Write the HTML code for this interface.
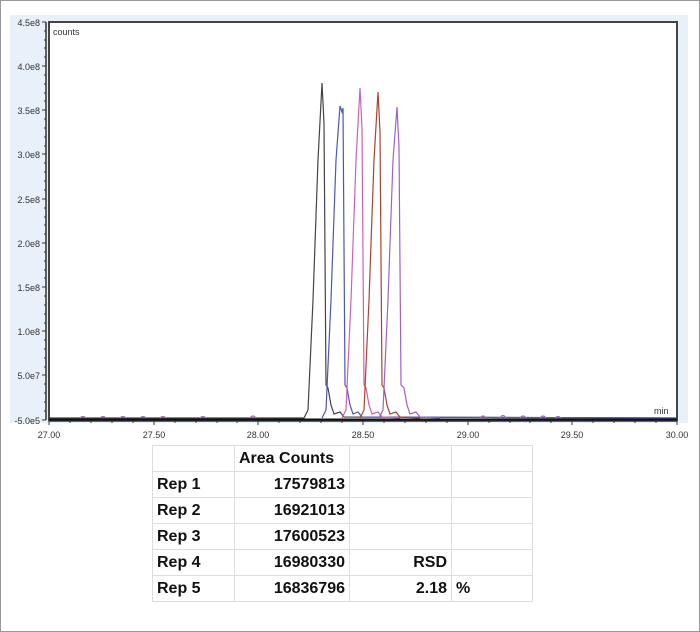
<!DOCTYPE html>
<html><head><meta charset="utf-8"><style>
body{margin:0;background:#fff;}
.wrap{position:relative;width:700px;height:632px;overflow:hidden;}
table{position:absolute;left:152px;top:445px;border-collapse:collapse;font-family:"Liberation Sans",sans-serif;font-weight:bold;font-size:16px;color:#111;}
td{border:1px solid #ddd;height:25px;padding:0 4px;}
</style></head><body><div class="wrap">
<svg width="700" height="632" style="position:absolute;left:0;top:0" font-family="Liberation Sans,sans-serif">
<rect x="0.5" y="0.5" width="699" height="631" fill="#fff" stroke="#999"/>
<rect x="10" y="15" width="678" height="408" fill="#e8f0fa"/>
<rect x="49" y="22" width="628" height="398" fill="#fff" stroke="#444" stroke-width="2"/>
<text x="53" y="35" font-size="9" fill="#333">counts</text>
<text x="654" y="414" font-size="9" fill="#333">min</text>
<g font-size="9" fill="#333" text-anchor="end">
<text x="40" y="26">4.5e8</text><text x="40" y="70">4.0e8</text><text x="40" y="114">3.5e8</text>
<text x="40" y="158">3.0e8</text><text x="40" y="203">2.5e8</text><text x="40" y="247">2.0e8</text>
<text x="40" y="291">1.5e8</text><text x="40" y="335">1.0e8</text><text x="40" y="379">5.0e7</text><text x="40" y="424">-5.0e5</text>
</g>
<g font-size="9" fill="#333" text-anchor="middle">
<text x="49" y="438">27.00</text><text x="154" y="438">27.50</text><text x="258" y="438">28.00</text>
<text x="363" y="438">28.50</text><text x="468" y="438">29.00</text><text x="572" y="438">29.50</text><text x="677" y="438">30.00</text>
</g>
<path d="M46 22V420M49 421H677" stroke="#333" stroke-width="1.5"/>
<path d="M46 22h-4M46 66h-4M46 110h-4M46 154h-4M46 199h-4M46 243h-4M46 287h-4M46 331h-4M46 375h-4M46 420h-4M49 421v4M154 421v4M258 421v4M363 421v4M468 421v4M572 421v4M677 421v4" stroke="#333"/>
<path d="M46 31h-2M46 40h-2M46 48h-2M46 57h-2M46 75h-2M46 84h-2M46 93h-2M46 101h-2M46 119h-2M46 128h-2M46 137h-2M46 146h-2M46 163h-2M46 172h-2M46 181h-2M46 190h-2M46 208h-2M46 217h-2M46 225h-2M46 234h-2M46 252h-2M46 261h-2M46 270h-2M46 278h-2M46 296h-2M46 305h-2M46 314h-2M46 323h-2M46 340h-2M46 349h-2M46 358h-2M46 367h-2M46 384h-2M46 393h-2M46 402h-2M46 411h-2M70 421v2M91 421v2M112 421v2M133 421v2M175 421v2M196 421v2M217 421v2M237 421v2M279 421v2M300 421v2M321 421v2M342 421v2M384 421v2M405 421v2M426 421v2M447 421v2M489 421v2M510 421v2M530 421v2M551 421v2M593 421v2M614 421v2M635 421v2M656 421v2" stroke="#333"/>
<g fill="none" stroke-width="1.2">
<path d="M49 418H304 L308 410 L313 300 L318 160 L322 83 L324 123 L326 385 L328 388 L331 405 L334 414 L340 412 L344 417 L677 418" stroke="#444"/>
<path d="M322 418 L326 410 L331 300 L336 160 L340 106 L342 112 L343 108 L345 385 L347 388 L350 405 L353 414 L358 412 L362 417 L677 418" stroke="#4a55c0"/>
<path d="M342 418 L346 410 L351 300 L356 160 L360 88 L362 128 L364 385 L366 388 L369 405 L372 414 L378 412 L382 417 L400 418" stroke="#d060b0"/>
<path d="M360 418 L364 410 L369 300 L374 160 L378 92 L380 132 L382 385 L384 388 L387 405 L390 414 L396 412 L400 417 L420 418" stroke="#b04030"/>
<path d="M379 418 L383 410 L388 300 L393 160 L397 107 L399 147 L401 385 L404 388 L407 405 L410 414 L416 412 L420 417 L440 418" stroke="#a060c8"/>
<path d="M80 418q3-3 6 0M100 418q3-3 6 0M120 418q3-3 6 0M140 418q3-3 6 0M160 418q3-3 6 0M200 418q3-3 6 0M250 418q3-4 6 0M480 418q3-4 6 0M500 418q3-5 6 0M520 418q3-4 6 0M540 418q3-4 6 0M555 418q3-3 6 0" stroke="#a070c0"/>
</g>
<path d="M49 419.5H677" stroke="#111" stroke-width="2"/>
</svg>
<table>
<tr><td style="width:73px"></td><td style="width:106px;text-align:left">Area Counts</td><td style="width:93px"></td><td style="width:72px"></td></tr>
<tr><td>Rep 1</td><td style="text-align:right">17579813</td><td></td><td></td></tr>
<tr><td>Rep 2</td><td style="text-align:right">16921013</td><td></td><td></td></tr>
<tr><td>Rep 3</td><td style="text-align:right">17600523</td><td></td><td></td></tr>
<tr><td>Rep 4</td><td style="text-align:right">16980330</td><td style="text-align:right">RSD</td><td></td></tr>
<tr><td>Rep 5</td><td style="text-align:right">16836796</td><td style="text-align:right">2.18</td><td>%</td></tr>
</table>
</div></body></html>
